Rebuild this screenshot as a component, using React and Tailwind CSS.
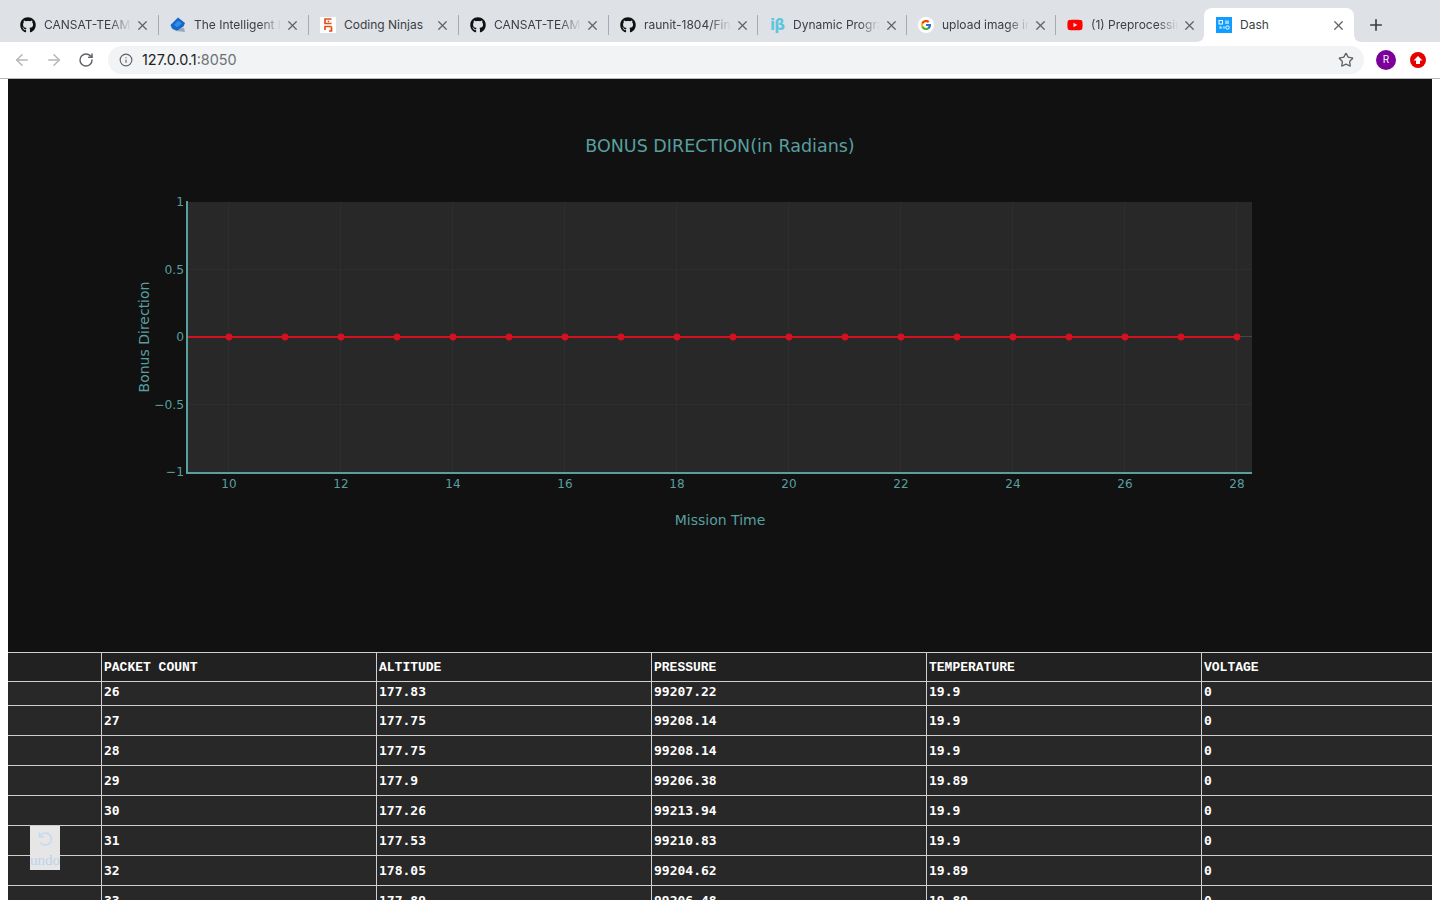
import React from "react";
import { ArrowLeft, ArrowRight, RotateCw, Info, Star, Plus, X } from "lucide-react";
import { FaGithub, FaYoutube } from "react-icons/fa";
import { FcGoogle } from "react-icons/fc";

const Gh = () => <FaGithub className="w-4 h-4 text-[#111]" />;
const BookIcon = () => (
  <svg viewBox="0 0 16 16" className="w-4 h-4">
    <path d="M2 12 L6 14 L15 15 L14 11 Z" fill="#98a8b8" />
    <path d="M0.5 8 L8 0.5 L15 6 L13.5 9.5 L7 13.5 L2 11.5 Z" fill="#1468c8" />
    <path d="M4 8 L8 3.5 L12 6.5 L7 10.5 Z" fill="#2f8fe6" />
  </svg>
);
const NinjaIcon = () => (
  <svg viewBox="0 0 16 16" className="w-4 h-4">
    <rect width="16" height="16" fill="#fff" />
    <path d="M11.5 2 H5 V6.5 H11.5 M11.5 9.5 H5 V13 M11.5 9.5 V14 H9" fill="none" stroke="#e2501a" strokeWidth="1.7" />
    <circle cx="8.5" cy="4.3" r="0.9" fill="#e2501a" />
  </svg>
);
const IbIcon = () => (
  <span className="w-4 h-4 flex items-center justify-center text-[15px] font-bold leading-none text-[#5cc6dc] [font-family:'DejaVu_Sans',sans-serif] tracking-[-1px]">iβ</span>
);
const GoogleIcon = () => (
  <span className="w-4 h-4 rounded-full bg-white flex items-center justify-center">
    <FcGoogle className="w-3 h-3" />
  </span>
);
const YtIcon = () => <FaYoutube className="w-4 h-4 text-[#f00]" />;
const DashIcon = () => (
  <svg viewBox="0 0 16 16" className="w-4 h-4">
    <rect width="16" height="16" fill="#119dff" />
    <rect x="3" y="3.5" width="3.5" height="3.5" fill="none" stroke="#fff" />
    <rect x="9" y="3.5" width="4" height="3.5" fill="#8fd4ff" />
    <circle cx="4.5" cy="10.5" r="1.5" fill="#8fd4ff" />
    <circle cx="8" cy="10.5" r="1.2" fill="#8fd4ff" />
    <circle cx="11.5" cy="10.5" r="1.7" fill="none" stroke="#fff" />
  </svg>
);

const wide = "w-[150px]";
const narrow = "w-[149px]";
const tabs = [
  { icon: <Gh />, title: "CANSAT-TEAM-ARES", w: wide },
  { icon: <BookIcon />, title: "The Intelligent Investor", w: wide },
  { icon: <NinjaIcon />, title: "Coding Ninjas", nofade: true, w: wide },
  { icon: <Gh />, title: "CANSAT-TEAM-ARES", w: wide },
  { icon: <Gh />, title: "raunit-1804/Final-Year", w: narrow },
  { icon: <IbIcon />, title: "Dynamic Programming", w: narrow },
  { icon: <GoogleIcon />, title: "upload image in dash", w: narrow },
  { icon: <YtIcon />, title: "(1) Preprocessing Data", w: narrow },
  { icon: <DashIcon />, title: "Dash", active: true, nofade: true, w: wide },
];

function Tab({ icon, title, active, nofade, last, w }) {
  return (
    <div className={`relative flex items-center shrink-0 ${w} h-[34px] pl-3 ${active ? "bg-white rounded-t-lg" : ""}`}>
      {active && (
        <svg className="absolute bottom-0 -left-2 w-2 h-2" viewBox="0 0 8 8">
          <path d="M0 8 C5 8 8 5 8 0 V8 Z" fill="#fff" />
        </svg>
      )}
      {active && (
        <svg className="absolute bottom-0 -right-2 w-2 h-2" viewBox="0 0 8 8">
          <path d="M8 8 C3 8 0 5 0 0 V8 Z" fill="#fff" />
        </svg>
      )}
      <span className="shrink-0 w-4 h-4 flex items-center justify-center">{icon}</span>
      <span
        className={`ml-2 w-[89px] shrink-0 overflow-hidden whitespace-nowrap text-xs text-[#3c4043] ${
          nofade ? "" : "[mask-image:linear-gradient(to_right,black_74%,transparent_98%)]"
        }`}
      >
        {title}
      </span>
      <X className="ml-[2px] shrink-0 w-[15px] h-[15px] text-[#5f6368]" strokeWidth={2} />
      {!active && !last && <span className="absolute -right-px top-[7px] w-px h-5 bg-[#a8abb0]" />}
    </div>
  );
}

const TEAL = "#589f9f";
const xs = Array.from({ length: 19 }, (_, i) => 229 + i * 56);
const majorX = [10, 12, 14, 16, 18, 20, 22, 24, 26, 28];

function Chart() {
  return (
    <svg viewBox="8 79 1424 573" className="block w-[1424px] h-[573px] bg-[#111111]" style={{ fontFamily: "'DejaVu Sans', sans-serif" }}>
      <rect x="187" y="202" width="1065" height="270" fill="#282828" />
      {majorX.map((v) => {
        const x = 229 + (v - 10) * 56 - 0.5;
        return <line key={v} x1={x} x2={x} y1="202" y2="472" stroke="#2e2e2e" strokeWidth="1" />;
      })}
      {[269.5, 404.5].map((y) => (
        <line key={y} x1="187" x2="1252" y1={y} y2={y} stroke="#2e2e2e" strokeWidth="1" />
      ))}
      <line x1="187" x2="1252" y1="336.5" y2="336.5" stroke="#484848" strokeWidth="1" />
      <line x1="187" x2="187" y1="201" y2="474" stroke={TEAL} strokeWidth="2" />
      <line x1="186" x2="1252" y1="473" y2="473" stroke={TEAL} strokeWidth="2" />
      <line x1="188" x2="1237" y1="337" y2="337" stroke="#d7101f" strokeWidth="2" />
      {xs.map((x) => (
        <circle key={x} cx={x} cy="337" r="3.4" fill="#d7101f" />
      ))}
      <text x="720" y="152" textAnchor="middle" fontSize="17.5" fill={TEAL}>BONUS DIRECTION(in Radians)</text>
      <text x="720" y="525" textAnchor="middle" fontSize="14" fill={TEAL}>Mission Time</text>
      <text transform="translate(149 337) rotate(-90)" textAnchor="middle" fontSize="14" fill={TEAL}>Bonus Direction</text>
      {[["1", 206], ["0.5", 274], ["0", 341], ["−0.5", 409], ["−1", 476]].map(([t, y]) => (
        <text key={t} x="184" y={y} textAnchor="end" fontSize="12.3" fill={TEAL}>{t}</text>
      ))}
      {majorX.map((v) => (
        <text key={v} x={229 + (v - 10) * 56} y="488" textAnchor="middle" fontSize="12" fill={TEAL}>{v}</text>
      ))}
    </svg>
  );
}

const rows = [
  ["26", "177.83", "99207.22", "19.9", "0"],
  ["27", "177.75", "99208.14", "19.9", "0"],
  ["28", "177.75", "99208.14", "19.9", "0"],
  ["29", "177.9", "99206.38", "19.89", "0"],
  ["30", "177.26", "99213.94", "19.9", "0"],
  ["31", "177.53", "99210.83", "19.9", "0"],
  ["32", "178.05", "99204.62", "19.89", "0"],
  ["33", "177.89", "99206.48", "19.89", "0"],
];
const heads = ["PACKET COUNT", "ALTITUDE", "PRESSURE", "TEMPERATURE", "VOLTAGE"];
const grid = "grid grid-cols-[93px_275px_275px_275px_275px_231px] w-[1424px]";

function DataTable() {
  return (
    <div className="w-[1424px] border-t border-[#cfcfcf] text-white font-bold text-[13px]">
      <div className={`${grid} h-[29px] bg-[#212121] border-b border-[#cfcfcf] [font-family:'Liberation_Mono',monospace]`}>
        <div />
        {heads.map((h) => (
          <div key={h} className="border-l border-[#cfcfcf] pl-[2px] flex items-center pt-px">{h}</div>
        ))}
      </div>
      {rows.map((r, i) => (
        <div key={r[0]} className={`${grid} ${i === 0 ? "h-6" : "h-[30px]"} bg-[#282828] border-b border-[#cfcfcf] [font-family:'DejaVu_Sans_Mono',monospace]`}>
          <div />
          {r.map((c, j) => (
            <div key={j} className={`border-l border-[#cfcfcf] pl-[2px] flex items-center ${i === 0 ? "pb-[7px]" : "pt-px"}`}>{c}</div>
          ))}
        </div>
      ))}
    </div>
  );
}

export default function App() {
  return (
    <div className="relative w-[1440px] h-[900px] overflow-hidden bg-white [font-family:Inter,'Noto_Sans',sans-serif]">
      <div className="flex h-[42px] bg-[#dee1e6] pl-2 pt-2">
        {tabs.map((t, i) => (
          <Tab key={i} {...t} last={i === 7} />
        ))}
        <Plus className="ml-[13px] mt-[8px] w-[18px] h-[18px] text-[#3c4043]" strokeWidth={2.2} />
      </div>
      <div className="flex items-center h-[37px] pb-px bg-white border-b border-[#b8b8b8] pl-[13px] pr-[14px]">
        <ArrowLeft className="w-[18px] h-[18px] text-[#b4b6b9]" strokeWidth={2} />
        <ArrowRight className="ml-[14px] w-[18px] h-[18px] text-[#b4b6b9]" strokeWidth={2} />
        <RotateCw className="ml-[15px] w-4 h-4 text-[#5f6368]" strokeWidth={2.2} />
        <div className="ml-[14px] flex items-center h-7 w-[1256px] rounded-full bg-[#f1f3f4] pl-[11px] pr-[10px]">
          <Info className="w-[14px] h-[14px] text-[#5f6368]" strokeWidth={2} />
          <span className="ml-[9px] pt-px text-[14.4px] leading-none text-[#202124]">127.0.0.1<span className="text-[#6d7175]">:8050</span></span>
          <Star className="ml-auto w-4 h-4 text-[#5f6368]" strokeWidth={2} />
        </div>
        <span className="ml-3 flex items-center justify-center w-5 h-5 rounded-full bg-[#7b0099] text-white text-[10px]">R</span>
        <span className="ml-[14px] flex items-center justify-center w-4 h-4 rounded-full bg-[#e60000]">
          <svg viewBox="0 0 10 10" className="w-[10px] h-[10px]"><path d="M5 1 L9.5 5.5 H7 V9 H3 V5.5 H0.5 Z" fill="#fff" /></svg>
        </span>
      </div>
      <div className="px-2">
        <Chart />
        <DataTable />
      </div>
      <div className="absolute left-[30px] top-[826px] w-[30px] h-11 bg-[#e6e6e6] flex flex-col items-center overflow-visible">
        <svg viewBox="0 0 16 16" className="mt-[5px] w-4 h-4" fill="none" stroke="#c6d9ef" strokeWidth="1.5">
          <path d="M3 5.5 A6 6 0 1 1 3.5 11.5" />
          <path d="M2.5 1.5 V5.8 H6.8" />
        </svg>
        <span className="mt-1 text-[15px] leading-[18px] text-[#bcd2ec] [font-family:'Liberation_Serif',serif]">undo</span>
      </div>
    </div>
  );
}
